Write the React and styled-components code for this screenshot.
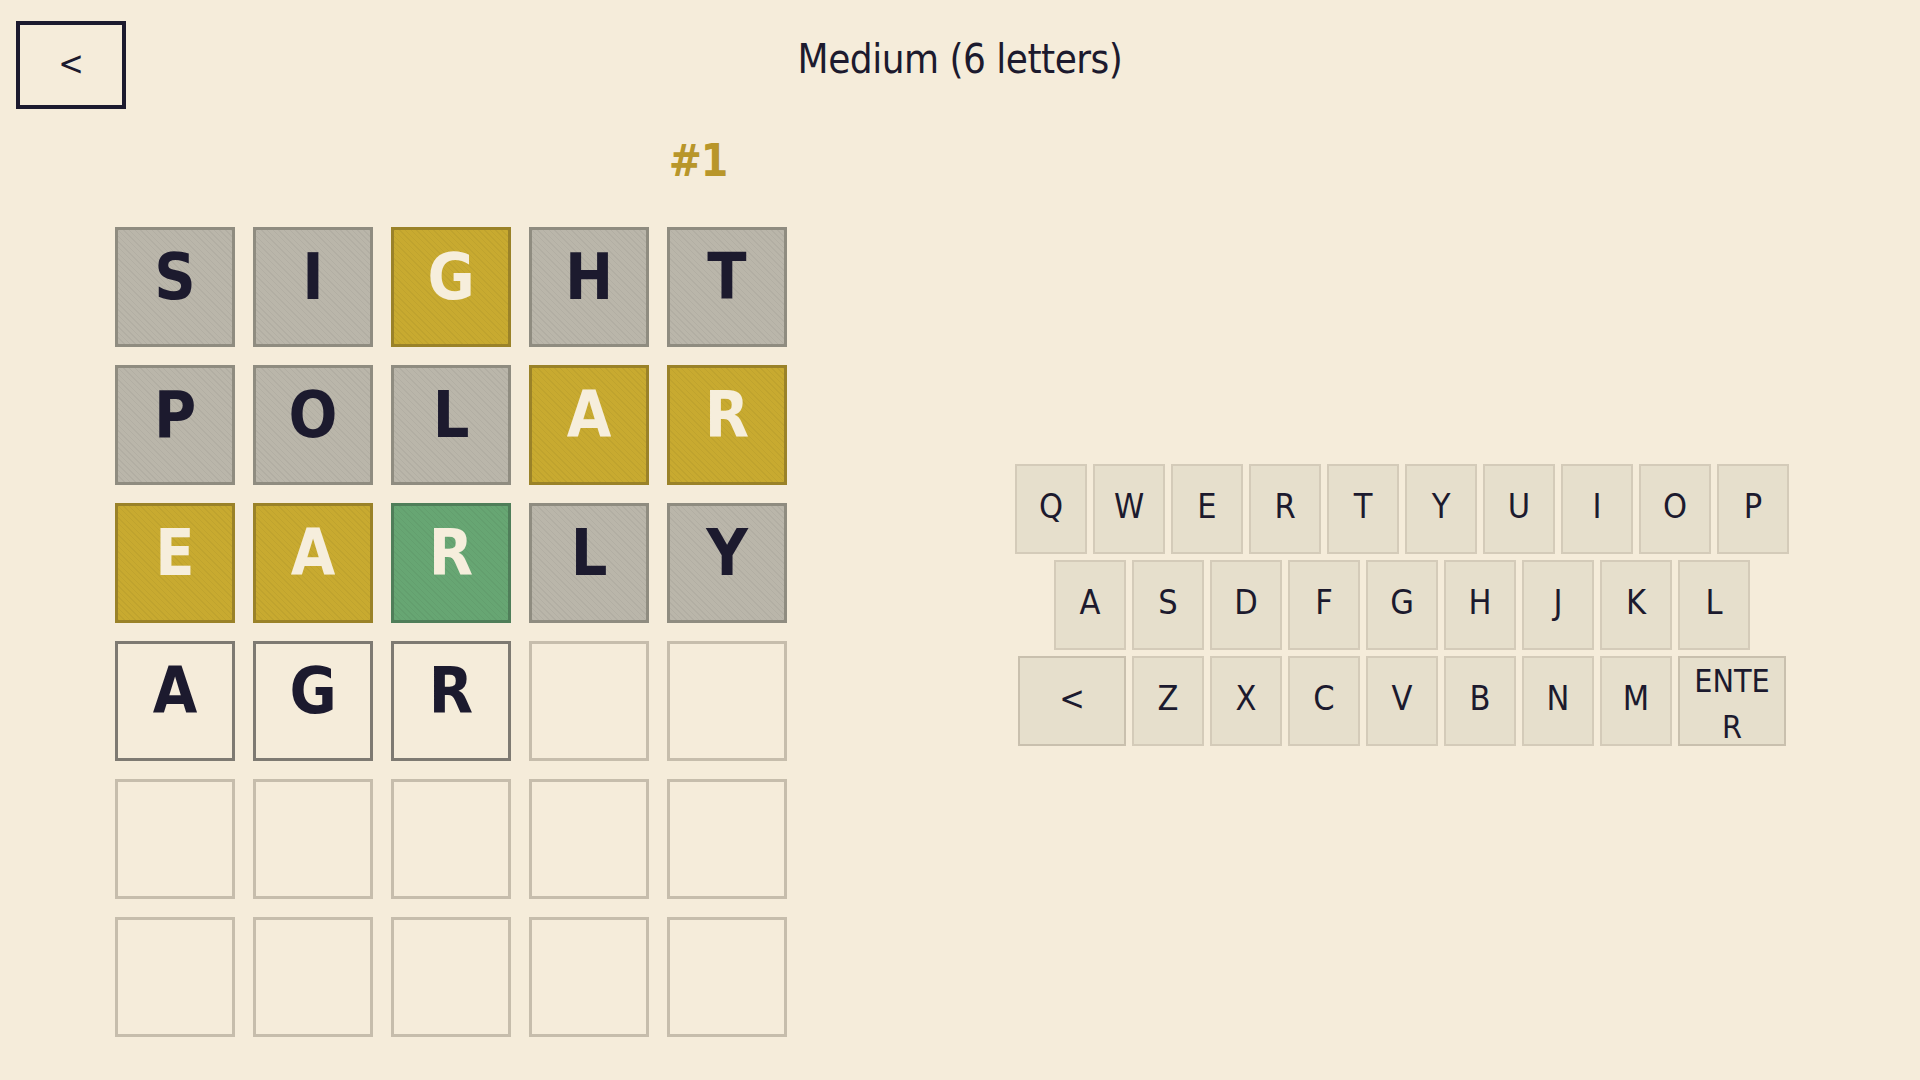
import styled, { createGlobalStyle } from "styled-components";

const GlobalStyle = createGlobalStyle`
  html, body {
    margin: 0;
    padding: 0;
    background: #f5ecda;
  }
  body {
    font-family: "DejaVu Sans Condensed", "Liberation Sans Narrow", "Noto Sans", sans-serif;
    color: #1c1a2e;
  }
`

const Page = styled.div`
  min-height: 100vh;
  background: #f5ecda;
`

const Header = styled.header`
  display: grid;
  grid-template-columns: 1fr auto 1fr;
  align-items: start;
  padding: 21px 16px 0;
`

const BackButton = styled.button`
  justify-self: start;
  width: 110px;
  height: 88px;
  box-sizing: border-box;
  border: 4px solid #1c1a2e;
  background: transparent;
  color: #1c1a2e;
  font-family: inherit;
  font-size: 34px;
  padding: 0 0 4px;
  cursor: pointer;
`

const Title = styled.h1`
  margin: 12px 0 0;
  font-size: 40px;
  font-weight: 400;
  line-height: 52px;
  letter-spacing: -0.5px;
`

const Round = styled.div`
  width: 1396px;
  margin-top: 26px;
  text-align: center;
  color: #b8962a;
  font-size: 44px;
  font-weight: 700;
  line-height: 52px;
  letter-spacing: -1px;
`

const Main = styled.main`
  display: flex;
  align-items: flex-start;
  padding: 40px 0 0 115px;
  gap: 228px;
`

const Board = styled.div`
  display: grid;
  grid-template-columns: repeat(5, 120px);
  grid-auto-rows: 120px;
  gap: 18px;
`

const tileLook = {
  absent: { bg: "#bab6aa", border: "#8f8c80", color: "#1c1a2e" },
  present: { bg: "#c8aa30", border: "#9a8228", color: "#f6eedc" },
  correct: { bg: "#67a673", border: "#4f7e59", color: "#f6eedc" },
  typed: { bg: "transparent", border: "#7e7a72", color: "#1c1a2e" },
  empty: { bg: "transparent", border: "#c6bdac", color: "#1c1a2e" },
};

const Tile = styled.div`
  box-sizing: border-box;
  display: flex;
  align-items: center;
  justify-content: center;
  padding-bottom: 20px;
  border: 3px solid ${(p) => tileLook[p.$state].border};
  background-color: ${(p) => tileLook[p.$state].bg};
  background-image: ${(p) =>
    p.$state === "absent" || p.$state === "present" || p.$state === "correct"
      ? "repeating-linear-gradient(45deg, rgba(0,0,0,0.045) 0 1px, transparent 1px 4px)"
      : "none"};
  color: ${(p) => tileLook[p.$state].color};
  font-size: 64px;
  font-weight: 700;
  line-height: 1;
`

const Keyboard = styled.div`
  display: flex;
  flex-direction: column;
  align-items: center;
  gap: 6px;
  margin-top: 237px;
`

const KeyRow = styled.div`
  display: flex;
  gap: 6px;
`

const Key = styled.button`
  box-sizing: border-box;
  width: ${(p) => (p.$wide ? "108px" : "72px")};
  height: 90px;
  padding: 0 0 6px;
  border: 2px solid ${(p) => (p.$wide ? "#c9c0ae" : "#d4cbb9")};
  background: #e6dfcc;
  color: #1c1a2e;
  font-family: inherit;
  font-size: 34px;
  line-height: 1;
  cursor: pointer;
`

const EnterLabel = styled.span`
  display: block;
  margin: 0 auto;
  width: 92px;
  word-break: break-all;
  font-size: 32px;
  line-height: 46px;
`

const guesses = [
  ["S", "absent"], ["I", "absent"], ["G", "present"], ["H", "absent"], ["T", "absent"],
  ["P", "absent"], ["O", "absent"], ["L", "absent"], ["A", "present"], ["R", "present"],
  ["E", "present"], ["A", "present"], ["R", "correct"], ["L", "absent"], ["Y", "absent"],
  ["A", "typed"], ["G", "typed"], ["R", "typed"], ["", "empty"], ["", "empty"],
];

const tiles = [...guesses, ...Array.from({ length: 10 }, () => ["", "empty"])];

const rows = ["QWERTYUIOP", "ASDFGHJKL"];

export default function App() {
  return (
    <Page>
      <GlobalStyle />
      <Header>
        <BackButton>&lt;</BackButton>
        <Title>Medium (6 letters)</Title>
      </Header>
      <Round>#1</Round>
      <Main>
        <Board>
          {tiles.map(([letter, state], i) => (
            <Tile key={i} $state={state}>{letter}</Tile>
          ))}
        </Board>
        <Keyboard>
          {rows.map((row) => (
            <KeyRow key={row}>
              {row.split("").map((k) => (
                <Key key={k}>{k}</Key>
              ))}
            </KeyRow>
          ))}
          <KeyRow>
            <Key $wide>&lt;</Key>
            {"ZXCVBNM".split("").map((k) => (
              <Key key={k}>{k}</Key>
            ))}
            <Key $wide>
              <EnterLabel>ENTER</EnterLabel>
            </Key>
          </KeyRow>
        </Keyboard>
      </Main>
    </Page>
  );
}
